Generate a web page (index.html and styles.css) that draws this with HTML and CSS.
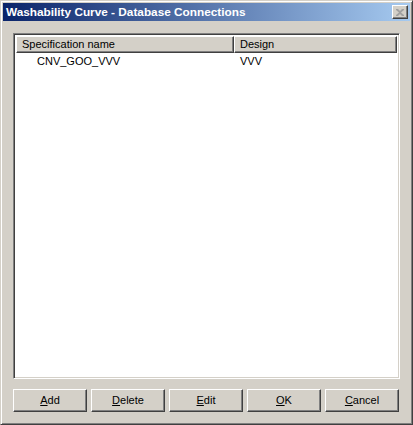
FILE: index.html
```html
<!DOCTYPE html>
<html>
<head>
<meta charset="utf-8">
<link rel="stylesheet" href="styles.css">
</head>
<body>
<div class="window">
  <div class="titlebar">
    <span class="title">Washability Curve - Database Connections</span>
    <span class="close">
      <svg width="8" height="7" viewBox="0 0 8 7"><path d="M0 0h2l2 2 2-2h2v1L5 3.5 8 6v1H6L4 5 2 7H0V6l3-2.5L0 1z" fill="#a0a0a0"/></svg>
    </span>
  </div>
  <div class="client">
    <div class="list">
      <div class="header">
        <div class="hcell col1">Specification name</div>
        <div class="hcell col2">Design</div>
      </div>
      <div class="row">
        <div class="cell col1 indent">CNV_GOO_VVV</div>
        <div class="cell col2">VVV</div>
      </div>
    </div>
    <div class="buttons">
      <button class="btn"><u>A</u>dd</button>
      <button class="btn"><u>D</u>elete</button>
      <button class="btn"><u>E</u>dit</button>
      <button class="btn"><u>O</u>K</button>
      <button class="btn"><u>C</u>ancel</button>
    </div>
  </div>
</div>
</body>
</html>
```

FILE: styles.css
```css
html, body {
  margin: 0;
  padding: 0;
  background: #d4d0c8;
}
body {
  font-family: "Liberation Sans", Arial, sans-serif;
  font-size: 11px;
  color: #000;
}
.window {
  width: 413px;
  height: 425px;
  box-sizing: border-box;
  background: #d4d0c8;
  border: 1px solid;
  border-color: #d4d0c8 #404040 #404040 #d4d0c8;
  box-shadow: inset 1px 1px #fff, inset -1px -1px #808080;
  padding: 2px 2px 2px 2px;
  display: flex;
  flex-direction: column;
}
.titlebar {
  height: 18px;
  background: linear-gradient(to right, #0a246a, #a6caf0);
  display: flex;
  align-items: center;
  justify-content: space-between;
  padding: 0 2px 0 3px;
}
.title {
  color: #fff;
  font-weight: bold;
  font-size: 11.8px;
  line-height: 18px;
}
.close {
  width: 16px;
  height: 14px;
  box-sizing: border-box;
  background: #d4d0c8;
  border: 1px solid;
  border-color: #fff #404040 #404040 #fff;
  box-shadow: inset -1px -1px #808080;
  display: flex;
  align-items: center;
  justify-content: center;
}
.client {
  flex: 1;
  display: flex;
  flex-direction: column;
  padding: 12px 10px 10px 10px;
  gap: 10px;
}
.list {
  flex: 1;
  background: #fff;
  border: 1px solid;
  border-color: #808080 #fff #fff #808080;
  box-shadow: inset 1px 1px #404040, inset -1px -1px #d4d0c8;
  padding: 2px;
}
.header {
  display: flex;
  height: 17px;
}
.hcell {
  box-sizing: border-box;
  background: #d4d0c8;
  border: 1px solid;
  border-color: #fff #404040 #404040 #fff;
  box-shadow: inset -1px -1px #808080;
  padding-left: 5px;
  line-height: 14px;
  white-space: nowrap;
}
.col1 { width: 218px; }
.col2 { flex: 1; }
.row {
  display: flex;
  height: 15px;
  align-items: center;
}
.cell {
  box-sizing: border-box;
  padding-left: 6px;
}
.cell.indent { padding-left: 21px; }
.buttons {
  display: flex;
  gap: 4px;
  padding-right: 1px;
}
.btn {
  width: 74px;
  height: 23px;
  box-sizing: border-box;
  background: #d4d0c8;
  font-family: "Liberation Sans", Arial, sans-serif;
  font-size: 11px;
  color: #000;
  border: 1px solid;
  border-color: #fff #404040 #404040 #fff;
  box-shadow: inset -1px -1px #808080;
  padding: 0 0 1px 0;
  margin: 0;
}
```
